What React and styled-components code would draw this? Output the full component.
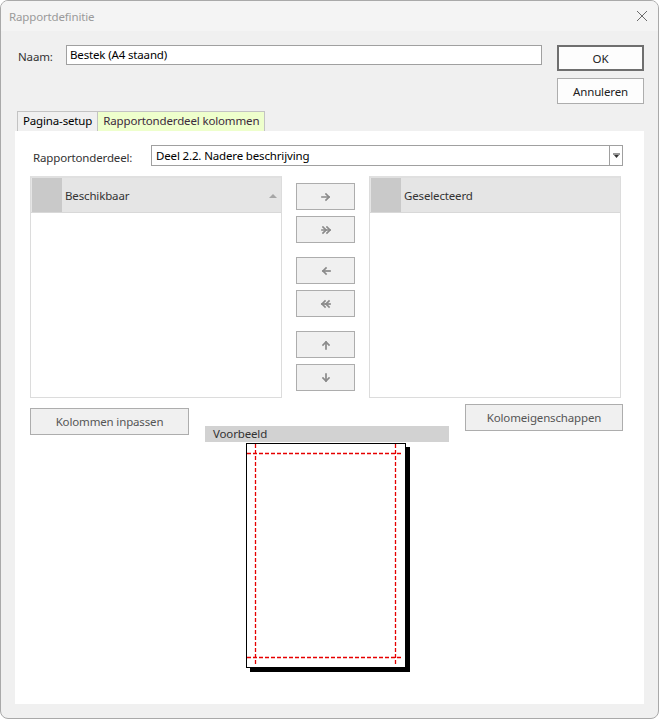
import React from 'react';
import styled, { createGlobalStyle } from 'styled-components';

const GlobalStyle = createGlobalStyle`
    html, body {
        margin: 0;
        padding: 0;
        background: #ffffff;
    }
    * {
        box-sizing: border-box;
    }
`;

const FONT = `"Noto Sans", "Open Sans", sans-serif`;

const Window = styled.div`
    width: 659px;
    height: 719px;
    border: 1px solid #a9a9a9;
    border-radius: 8px;
    background: #f0f0f0;
    overflow: hidden;
    display: flex;
    flex-direction: column;
    font-family: ${FONT};
    font-size: 11.5px;
    letter-spacing: -0.15px;
    color: #222;
`;

const TitleBar = styled.div`
    height: 30px;
    flex: none;
    background: #f4f4f4;
    display: flex;
    align-items: center;
    justify-content: space-between;
    padding: 0 9px 0 8px;
    color: #9a9a9a;
`;

const CloseButton = styled.div`
    width: 14px;
    height: 14px;
    display: flex;
    align-items: center;
    justify-content: center;
`;

const Body = styled.div`
    flex: 1;
    display: flex;
    flex-direction: column;
    padding: 14px 14px 14px 14px;
`;

const TopRow = styled.div`
    display: flex;
    align-items: flex-start;
    padding-left: 3px;
`;

const Label = styled.label`
    width: ${(p) => p.width || 48}px;
    flex: none;
    padding-top: ${(p) => p.pt || 3}px;
    color: #333;
`;

const TextInput = styled.div`
    width: 476px;
    height: 20px;
    border: 1px solid #a0a0a0;
    background: #fff;
    padding: 0 3px;
    line-height: 18px;
    color: #000;
`;

const DialogButtons = styled.div`
    margin-left: auto;
    display: flex;
    flex-direction: column;
    gap: 7px;
`;

const DialogButton = styled.button`
    width: 87px;
    height: 26px;
    background: #fdfdfd;
    border: ${(p) => (p.primary ? '2px solid #6f6f6f' : '1px solid #adadad')};
    font-family: ${FONT};
    font-size: 11.5px;
    letter-spacing: -0.15px;
    color: #222;
    padding: 0;
`;

const TabRow = styled.div`
    display: flex;
    margin-top: 7px;
    padding-left: 2px;
`;

const Tab = styled.div`
    height: 20px;
    padding: 0 5px;
    line-height: 18px;
    border: 1px solid #c3c3c3;
    border-bottom: none;
    border-left: ${(p) => (p.first ? '1px solid #c3c3c3' : 'none')};
    background: ${(p) => (p.active ? '#eeffcc' : '#f0f0f0')};
    color: ${(p) => (p.active ? '#3c2a3c' : '#000')};
`;

const Panel = styled.div`
    flex: 1;
    background: #fff;
    padding: 14px 21px 0 15px;
    display: flex;
    flex-direction: column;
`;

const SelectRow = styled.div`
    display: flex;
    align-items: center;
    padding-left: 3px;
`;

const Select = styled.div`
    flex: 1;
    height: 21px;
    border: 1px solid #a0a0a0;
    display: flex;
    align-items: stretch;
    margin-left: 15px;
`;

const SelectValue = styled.div`
    flex: 1;
    padding: 0 4px;
    line-height: 19px;
    color: #000;
`;

const SelectArrow = styled.div`
    width: 13px;
    border-left: 1px solid #a0a0a0;
    display: flex;
    align-items: center;
    justify-content: center;
`;

const Chooser = styled.div`
    display: grid;
    grid-template-columns: 252px 59px 252px;
    column-gap: 14px;
    margin-top: 10px;
`;

const ListBox = styled.div`
    height: 222px;
    border: 1px solid #dcdcdc;
    border-top: 2px solid #e0e0e0;
    background: #fff;
`;

const ListHeader = styled.div`
    height: 35px;
    background: #e5e5e5;
    display: flex;
    align-items: center;
    border-bottom: 1px solid #d8d8d8;
    padding-right: 4px;
`;

const HeaderSquare = styled.div`
    width: 30px;
    align-self: stretch;
    background: #c9c9c9;
    margin: 0 3px 0 1px;
`;

const HeaderText = styled.div`
    flex: 1;
    color: #333;
`;

const ArrowColumn = styled.div`
    display: flex;
    flex-direction: column;
    padding-top: 7px;
`;

const ArrowButton = styled.button`
    width: 59px;
    height: 27px;
    background: #f0f0f0;
    border: 1px solid #adadad;
    display: flex;
    align-items: center;
    justify-content: center;
    padding: 0;
    margin-top: ${(p) => p.gap}px;
`;

const Lower = styled.div`
    display: grid;
    grid-template-columns: 159px 244px 158px;
    column-gap: 16px;
    align-items: start;
`;

const GreyButton = styled.button`
    height: 27px;
    background: #f0f0f0;
    border: 1px solid #adadad;
    font-family: ${FONT};
    font-size: 11.5px;
    letter-spacing: -0.15px;
    color: #555;
    padding: 0;
    margin-top: ${(p) => p.mt}px;
`;

const Preview = styled.div`
    margin-top: 28px;
    display: flex;
    flex-direction: column;
`;

const PreviewHeader = styled.div`
    height: 16px;
    background: #d2d2d2;
    padding-left: 8px;
    line-height: 15px;
    color: #333;
`;

const Page = styled.div`
    width: 160px;
    height: 225px;
    margin: 1px 0 0 41px;
    border: 1px solid #000;
    background: #fff;
    box-shadow: 4px 4px 0 #000;
    position: relative;
`;

const MarginLines = styled.svg`
    position: absolute;
    left: 0;
    top: 0;
    display: block;
`;

function ArrowIcon({ dir, double }) {
    const rot = { right: 0, down: 90, left: 180, up: 270 }[dir];
    return (
        <svg width="12" height="12" viewBox="0 0 12 12" style={{ transform: `rotate(${rot}deg)` }}>
            <g fill="none" stroke="#8a8a8a" strokeWidth="1.7" strokeLinecap="square">
                {double ? (
                    <>
                        <path d="M2 6h8" />
                        <path d="M3 3l3 3-3 3" />
                        <path d="M7 3l3 3-3 3" />
                    </>
                ) : (
                    <>
                        <path d="M2 6h7" />
                        <path d="M6 3l3 3-3 3" />
                    </>
                )}
            </g>
        </svg>
    );
}

const arrowButtons = [
    { dir: 'right', gap: 0 },
    { dir: 'right', double: true, gap: 6 },
    { dir: 'left', gap: 14 },
    { dir: 'left', double: true, gap: 6 },
    { dir: 'up', gap: 14 },
    { dir: 'down', gap: 6 },
];

const marginPaths = ['M0 9.5H155', 'M0 213.5H155', 'M8.5 0V220', 'M148.5 0V220'];

export default function App() {
    return (
        <>
            <GlobalStyle />
            <Window>
                <TitleBar>
                    <span>Rapportdefinitie</span>
                    <CloseButton>
                        <svg width="12" height="12" viewBox="0 0 12 12">
                            <path d="M1 1l10 10M11 1L1 11" stroke="#6b6b6b" strokeWidth="1" />
                        </svg>
                    </CloseButton>
                </TitleBar>
                <Body>
                    <TopRow>
                        <Label pt={4}>Naam:</Label>
                        <TextInput>Bestek (A4 staand)</TextInput>
                        <DialogButtons>
                            <DialogButton primary>OK</DialogButton>
                            <DialogButton>Annuleren</DialogButton>
                        </DialogButtons>
                    </TopRow>

                    <TabRow>
                        <Tab first>Pagina-setup</Tab>
                        <Tab active>Rapportonderdeel kolommen</Tab>
                    </TabRow>

                    <Panel>
                        <SelectRow>
                            <Label width={103} pt={0}>Rapportonderdeel:</Label>
                            <Select>
                                <SelectValue>Deel 2.2. Nadere beschrijving</SelectValue>
                                <SelectArrow>
                                    <svg width="7" height="6" viewBox="0 0 7 6">
                                        <path d="M0 1h7" stroke="#333" strokeWidth="1" />
                                        <path d="M1 2h5l-2.5 3z" fill="#333" />
                                    </svg>
                                </SelectArrow>
                            </Select>
                        </SelectRow>

                        <Chooser>
                            <ListBox>
                                <ListHeader>
                                    <HeaderSquare />
                                    <HeaderText>Beschikbaar</HeaderText>
                                    <svg width="8" height="5" viewBox="0 0 8 5">
                                        <path d="M0 5L4 1l4 4z" fill="#a6a6a6" />
                                    </svg>
                                </ListHeader>
                            </ListBox>

                            <ArrowColumn>
                                {arrowButtons.map((b, i) => (
                                    <ArrowButton key={i} gap={b.gap}>
                                        <ArrowIcon dir={b.dir} double={b.double} />
                                    </ArrowButton>
                                ))}
                            </ArrowColumn>

                            <ListBox>
                                <ListHeader>
                                    <HeaderSquare />
                                    <HeaderText>Geselecteerd</HeaderText>
                                </ListHeader>
                            </ListBox>
                        </Chooser>

                        <Lower>
                            <GreyButton mt={10}>Kolommen inpassen</GreyButton>
                            <Preview>
                                <PreviewHeader>Voorbeeld</PreviewHeader>
                                <Page>
                                    <MarginLines width="158" height="223" viewBox="0 0 158 223">
                                        {marginPaths.map((d) => (
                                            <path
                                                key={d}
                                                d={d}
                                                fill="none"
                                                stroke="rgb(230, 0, 0)"
                                                strokeWidth="1.3"
                                                strokeDasharray="4 2"
                                            />
                                        ))}
                                    </MarginLines>
                                </Page>
                            </Preview>
                            <GreyButton mt={6}>Kolomeigenschappen</GreyButton>
                        </Lower>
                    </Panel>
                </Body>
            </Window>
        </>
    );
}
